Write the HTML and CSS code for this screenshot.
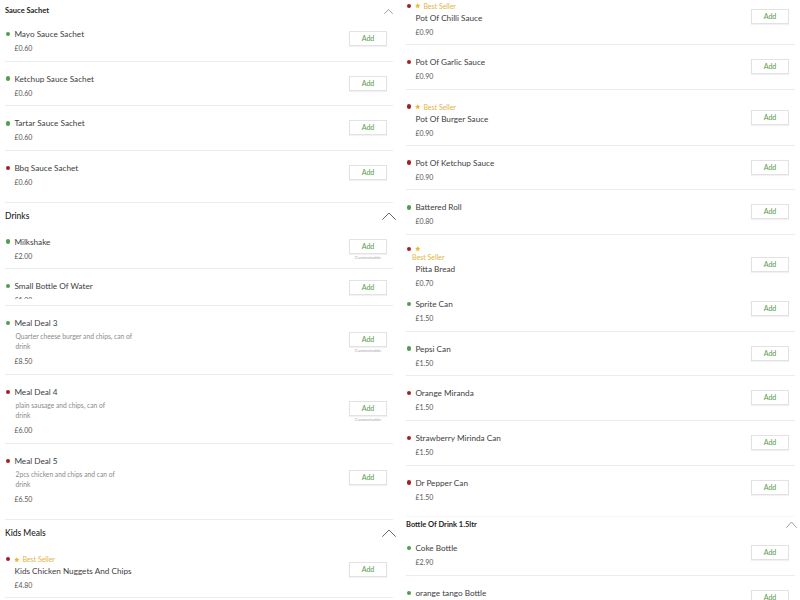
FILE: index.html
```html
<!DOCTYPE html>
<html lang="en">
<head>
<meta charset="utf-8">
<title>Menu</title>
<link rel="stylesheet" href="styles.css">
</head>
<body>
<div class="menu">
  <div class="col col-left">
    <section class="cat">
      <div class="cat-head sm"><h3>Sauce Sachet</h3><svg class="chev sm" viewBox="0 0 9 5"><polyline points="0.5,4.5 4.5,0.6 8.5,4.5"/></svg></div>
      <div class="item"><div class="info"><div class="lead"><span class="dot veg"></span><span class="name">Mayo Sauce Sachet</span></div><div class="price">£0.60</div></div><div class="action"><button class="add">Add</button><span class="custom"></span></div></div>
      <div class="item"><div class="info"><div class="lead"><span class="dot veg"></span><span class="name">Ketchup Sauce Sachet</span></div><div class="price">£0.60</div></div><div class="action"><button class="add">Add</button><span class="custom"></span></div></div>
      <div class="item"><div class="info"><div class="lead"><span class="dot veg"></span><span class="name">Tartar Sauce Sachet</span></div><div class="price">£0.60</div></div><div class="action"><button class="add">Add</button><span class="custom"></span></div></div>
      <div class="item last"><div class="info"><div class="lead"><span class="dot nonveg"></span><span class="name">Bbq Sauce Sachet</span></div><div class="price">£0.60</div></div><div class="action"><button class="add">Add</button><span class="custom"></span></div></div>
    </section>
    <section class="cat">
      <div class="cat-head lg"><h3>Drinks</h3><svg class="chev lg" viewBox="0 0 14 8"><polyline points="0.6,7.4 7,1 13.4,7.4"/></svg></div>
      <div class="item"><div class="info"><div class="lead"><span class="dot veg"></span><span class="name">Milkshake</span></div><div class="price">£2.00</div></div><div class="action"><button class="add">Add</button><span class="custom">Customizable</span></div></div>
      <div class="item clip"><div class="info"><div class="lead"><span class="dot veg"></span><span class="name">Small Bottle Of Water</span></div><div class="price">£1.00</div></div><div class="action"><button class="add">Add</button><span class="custom"></span></div></div>
      <div class="item has-desc"><div class="info"><div class="lead"><span class="dot veg"></span><span class="name">Meal Deal 3</span></div><div class="desc">Quarter cheese burger and chips, can of<br>drink</div><div class="price">£8.50</div></div><div class="action"><button class="add">Add</button><span class="custom">Customizable</span></div></div>
      <div class="item has-desc"><div class="info"><div class="lead"><span class="dot nonveg"></span><span class="name">Meal Deal 4</span></div><div class="desc">plain sausage and chips, can of<br>drink</div><div class="price">£6.00</div></div><div class="action"><button class="add">Add</button><span class="custom">Customizable</span></div></div>
      <div class="item has-desc last"><div class="info"><div class="lead"><span class="dot nonveg"></span><span class="name">Meal Deal 5</span></div><div class="desc">2pcs chicken and chips and can of<br>drink</div><div class="price">£6.50</div></div><div class="action"><button class="add">Add</button><span class="custom"></span></div></div>
    </section>
    <section class="cat">
      <div class="cat-head lg"><h3>Kids Meals</h3><svg class="chev lg" viewBox="0 0 14 8"><polyline points="0.6,7.4 7,1 13.4,7.4"/></svg></div>
      <div class="item bs"><div class="info"><div class="lead tag"><span class="dot nonveg"></span><svg class="star" viewBox="0 0 10 10"><polygon points="5,0.3 6.4,3.4 9.8,3.7 7.2,6 8,9.5 5,7.7 2,9.5 2.8,6 0.2,3.7 3.6,3.4"/></svg><span class="bs-text">Best Seller</span></div><div class="name">Kids Chicken Nuggets And Chips</div><div class="price">£4.80</div></div><div class="action"><button class="add">Add</button><span class="custom"></span></div></div>
    </section>
  </div>

  <div class="col col-right">
    <section class="cat">
      <div class="item bs"><div class="info"><div class="lead tag"><span class="dot nonveg"></span><svg class="star" viewBox="0 0 10 10"><polygon points="5,0.3 6.4,3.4 9.8,3.7 7.2,6 8,9.5 5,7.7 2,9.5 2.8,6 0.2,3.7 3.6,3.4"/></svg><span class="bs-text">Best Seller</span></div><div class="name">Pot Of Chilli Sauce</div><div class="price">£0.90</div></div><div class="action"><button class="add">Add</button><span class="custom"></span></div></div>
      <div class="item"><div class="info"><div class="lead"><span class="dot nonveg"></span><span class="name">Pot Of Garlic Sauce</span></div><div class="price">£0.90</div></div><div class="action"><button class="add">Add</button><span class="custom"></span></div></div>
      <div class="item bs"><div class="info"><div class="lead tag"><span class="dot nonveg"></span><svg class="star" viewBox="0 0 10 10"><polygon points="5,0.3 6.4,3.4 9.8,3.7 7.2,6 8,9.5 5,7.7 2,9.5 2.8,6 0.2,3.7 3.6,3.4"/></svg><span class="bs-text">Best Seller</span></div><div class="name">Pot Of Burger Sauce</div><div class="price">£0.90</div></div><div class="action"><button class="add">Add</button><span class="custom"></span></div></div>
      <div class="item"><div class="info"><div class="lead"><span class="dot nonveg"></span><span class="name">Pot Of Ketchup Sauce</span></div><div class="price">£0.90</div></div><div class="action"><button class="add">Add</button><span class="custom"></span></div></div>
      <div class="item"><div class="info"><div class="lead"><span class="dot veg"></span><span class="name">Battered Roll</span></div><div class="price">£0.80</div></div><div class="action"><button class="add">Add</button><span class="custom"></span></div></div>
      <div class="item wrapped"><div class="info"><div class="lead tag"><span class="dot nonveg"></span><svg class="star" viewBox="0 0 10 10"><polygon points="5,0.3 6.4,3.4 9.8,3.7 7.2,6 8,9.5 5,7.7 2,9.5 2.8,6 0.2,3.7 3.6,3.4"/></svg></div><div class="bs-text bs-line">Best Seller</div><div class="name">Pitta Bread</div><div class="price">£0.70</div></div><div class="action"><button class="add">Add</button><span class="custom"></span></div></div>
      <div class="item"><div class="info"><div class="lead"><span class="dot veg"></span><span class="name">Sprite Can</span></div><div class="price">£1.50</div></div><div class="action"><button class="add">Add</button><span class="custom"></span></div></div>
      <div class="item"><div class="info"><div class="lead"><span class="dot veg"></span><span class="name">Pepsi Can</span></div><div class="price">£1.50</div></div><div class="action"><button class="add">Add</button><span class="custom"></span></div></div>
      <div class="item"><div class="info"><div class="lead"><span class="dot nonveg"></span><span class="name">Orange Miranda</span></div><div class="price">£1.50</div></div><div class="action"><button class="add">Add</button><span class="custom"></span></div></div>
      <div class="item"><div class="info"><div class="lead"><span class="dot nonveg"></span><span class="name">Strawberry Mirinda Can</span></div><div class="price">£1.50</div></div><div class="action"><button class="add">Add</button><span class="custom"></span></div></div>
      <div class="item last no-line"><div class="info"><div class="lead"><span class="dot nonveg"></span><span class="name">Dr Pepper Can</span></div><div class="price">£1.50</div></div><div class="action"><button class="add">Add</button><span class="custom"></span></div></div>
    </section>
    <section class="cat">
      <div class="cat-head sm"><h3>Bottle Of Drink 1.5ltr</h3><svg class="chev sm2" viewBox="0 0 11 7"><polyline points="0.5,6.5 5.5,1 10.5,6.5"/></svg></div>
      <div class="item"><div class="info"><div class="lead"><span class="dot veg"></span><span class="name">Coke Bottle</span></div><div class="price">£2.90</div></div><div class="action"><button class="add">Add</button><span class="custom"></span></div></div>
      <div class="item"><div class="info"><div class="lead"><span class="dot veg"></span><span class="name">orange tango Bottle</span></div><div class="price">£3.50</div></div><div class="action"><button class="add">Add</button><span class="custom"></span></div></div>
    </section>
  </div>
</div>
</body>
</html>
```

FILE: styles.css
```css
html, body {
  margin: 0;
  padding: 0;
  height: 600px;
  overflow: hidden;
  background: #ffffff;
}

body {
  font-family: Lato, "Open Sans", "Liberation Sans", sans-serif;
  color: #3b3b3b;
}

.menu {
  display: grid;
  grid-template-columns: 388px 389px;
  column-gap: 13px;
  padding-left: 5px;
  align-items: start;
}

.col-left {
  margin-top: 3px;
}

.col-right {
  margin-top: -11px;
}

/* category headers */
.cat-head {
  display: flex;
  justify-content: space-between;
  align-items: flex-start;
  box-sizing: border-box;
}

.cat-head h3 {
  margin: 0;
  line-height: 12px;
  color: #222;
}

.cat-head.sm {
  height: 14px;
  padding-top: 2px;
}

.cat-head.sm h3 {
  font-size: 7.5px;
  font-weight: 700;
}

.cat-head.lg {
  height: 22px;
  padding-top: 7px;
}

.cat-head.lg h3 {
  font-size: 8.5px;
  font-weight: 500;
}

.chev {
  fill: none;
  stroke-linecap: round;
  stroke-linejoin: round;
}

.chev.sm {
  width: 9px;
  height: 5px;
  margin-top: 3.5px;
  stroke: #888;
  stroke-width: 0.8;
}

.chev.sm2 {
  width: 11px;
  height: 7px;
  margin-top: 2px;
  margin-right: -2px;
  stroke: #888;
  stroke-width: 0.8;
}

.chev.lg {
  width: 14px;
  height: 8px;
  margin-top: 2px;
  margin-right: -3px;
  stroke: #555;
  stroke-width: 0.9;
}

/* items */
.item {
  display: flex;
  align-items: center;
  padding: 11px 6px 6.67px 0;
  border-bottom: 1px solid #ececec;
}

.item.bs {
  padding-bottom: 6px;
}

.item.has-desc {
  padding-bottom: 7px;
}

.item.last {
  padding-bottom: 13.67px;
}

.item.has-desc.last {
  padding-bottom: 14px;
}

.item.no-line {
  border-bottom-color: #f6f6f6;
}

.item.clip {
  box-sizing: border-box;
  height: 37px;
  padding-bottom: 6px;
}

.item.clip .info {
  max-height: 19px;
  overflow: hidden;
}

.item.wrapped {
  box-sizing: border-box;
  height: 52px;
  padding-top: 12px;
  padding-bottom: 0;
  border-bottom: none;
}

.info {
  flex: 1;
  min-width: 0;
  padding-left: 9.5px;
}

.lead {
  display: flex;
  align-items: center;
  margin-left: -9.5px;
}

.dot {
  flex: none;
  width: 4.4px;
  height: 4.4px;
  border-radius: 50%;
  margin: 0 4.2px 0 0.8px;
}

.dot.veg {
  background: #4f9e4c;
}

.dot.nonveg {
  background: #a51f22;
}

.name {
  font-size: 8.2px;
  line-height: 12px;
  color: #404040;
  white-space: nowrap;
}

.price {
  margin-top: 2px;
  font-size: 7px;
  line-height: 12px;
  color: #555;
}

.desc {
  margin-top: 2px;
  padding-left: 1px;
  font-size: 6.7px;
  line-height: 10px;
  color: #8a8a8a;
  white-space: nowrap;
}

.desc + .price {
  margin-top: 4px;
}

.tag {
  height: 12px;
}

.star {
  flex: none;
  width: 5.5px;
  height: 5.5px;
  margin-right: 2.5px;
  fill: #f1b52a;
}

.bs-text {
  font-size: 7px;
  line-height: 12px;
  color: #e3b33f;
  white-space: nowrap;
}

.item.wrapped .tag {
  height: 9px;
}

.item.wrapped .bs-line {
  line-height: 8px;
  margin-left: -3.5px;
}

.item.wrapped .name {
  margin-top: 2px;
}

/* add button */
.action {
  flex: none;
  display: flex;
  flex-direction: column;
  align-items: center;
  padding-top: 2px;
}

.add {
  box-sizing: border-box;
  width: 38px;
  height: 15px;
  padding: 0;
  border: 1px solid #e2e2e2;
  background: #fff;
  box-shadow: 0 1px 1px rgba(0, 0, 0, 0.05);
  color: #5d9e51;
  font-family: Lato, "Open Sans", "Liberation Sans", sans-serif;
  font-size: 7px;
  font-weight: 500;
  line-height: 13px;
}

.custom {
  height: 7px;
  font-size: 4.5px;
  line-height: 7px;
  color: #a8a8a8;
  white-space: nowrap;
}
```
